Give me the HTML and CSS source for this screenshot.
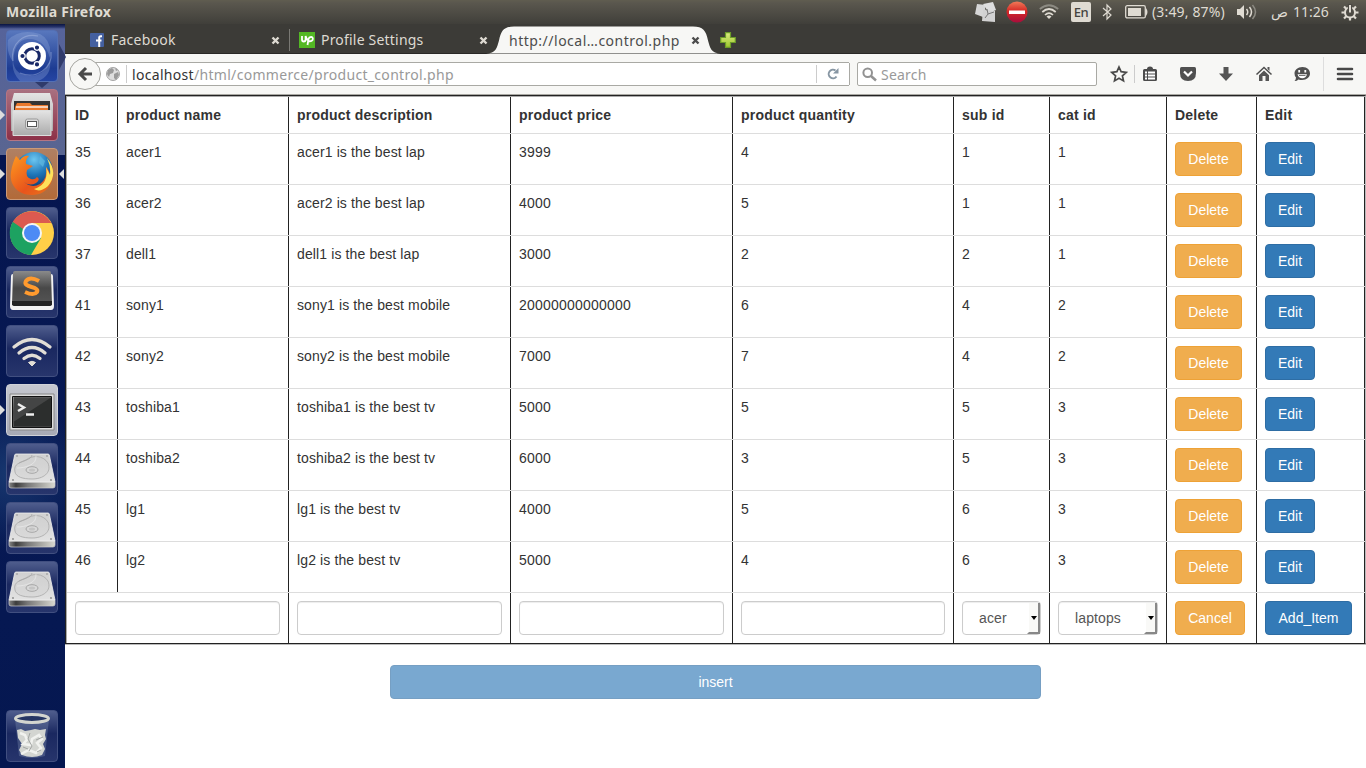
FILE: index.html
```html
<!DOCTYPE html>
<html lang="en">
<head>
<meta charset="utf-8">
<title>Mozilla Firefox</title>
<link rel="stylesheet" href="styles.css">
</head>
<body>
<svg class="defs" width="0" height="0">
  <defs>
    <linearGradient id="metal" x1="0" y1="0" x2="0" y2="1"><stop offset="0" stop-color="#e4e4e4"/><stop offset="1" stop-color="#aaa"/></linearGradient>
    <linearGradient id="plate" x1="0" y1="0" x2="0" y2="1"><stop offset="0" stop-color="#d0d0d0"/><stop offset="1" stop-color="#e2e2e2"/></linearGradient>
    <linearGradient id="front" x1="0" y1="0" x2="1" y2="0"><stop offset="0" stop-color="#888"/><stop offset=".15" stop-color="#3c3c3c"/><stop offset=".4" stop-color="#777"/><stop offset="1" stop-color="#d8d8d0"/></linearGradient>
    <linearGradient id="dark" x1="0" y1="0" x2="0" y2="1"><stop offset="0" stop-color="#8a8a8a"/><stop offset=".5" stop-color="#484848"/><stop offset="1" stop-color="#555"/></linearGradient>
    <linearGradient id="flame" x1="0" y1="0" x2="1" y2="1"><stop offset="0" stop-color="#ff9a1f"/><stop offset=".6" stop-color="#e8541c"/><stop offset="1" stop-color="#e9781c"/></linearGradient>
    <radialGradient id="ocean" cx=".5" cy=".2" r=".8"><stop offset="0" stop-color="#6cc6f0"/><stop offset=".5" stop-color="#1e75b8"/><stop offset="1" stop-color="#0c2f63"/></radialGradient>
    <linearGradient id="stopred" x1="0" y1="0" x2="0" y2="1"><stop offset="0" stop-color="#f07a58"/><stop offset=".45" stop-color="#d62a26"/><stop offset="1" stop-color="#a80d3c"/></linearGradient>
    <linearGradient id="plusg" x1="0" y1="0" x2="0" y2="1"><stop offset="0" stop-color="#dcec80"/><stop offset="1" stop-color="#9cc62c"/></linearGradient>
    <symbol id="disk" viewBox="0 0 52 52">
      <path d="M3 39h46v4q0 2-2 2H5q-2 0-2-2z" fill="url(#front)" stroke="#ccc" stroke-width=".7"/>
      <path d="M10 11h32q1 0 1.300 1L49 39H3L8.700 12q.3-1 1.300-1z" fill="url(#plate)" stroke="#f0f0f0" stroke-width=".8"/>
      <path d="M9 29C7 20 15 20 20 17C26 12 37 12 42 20C46 30 37 36 26 36C17 36 10 34 9 29zM13 20C18 17 25 17 26 12" fill="#cfcfcf" fill-opacity=".4" stroke="#a8a8a8" stroke-width=".8"/>
      <path d="M11 25C19 25 31 22 30 13" fill="none" stroke="#e8e8e8" stroke-width=".8"/>
      <ellipse cx="26" cy="27" rx="6" ry="3.300" fill="#d8d8d8" stroke="#999" stroke-width=".8"/>
      <ellipse cx="26" cy="27" rx="3" ry="1.500" fill="#c4c4c4"/>
      <g fill="#888"><circle cx="11" cy="13" r=".8"/><circle cx="41" cy="13" r=".8"/><circle cx="7" cy="37" r=".9"/><circle cx="45" cy="37" r=".9"/></g>
    </symbol>
    <symbol id="close" viewBox="0 0 9 9"><path d="M1.500 1.500l6 6m0-6l-6 6" stroke="currentColor" stroke-width="2.400"/></symbol>
  </defs>
</svg>

<header class="panel">
  <span class="app-name">Mozilla Firefox</span>
  <div class="tray">
    <svg class="t-notes" width="22" height="22" viewBox="0 0 22 22"><path d="M3 3l9 1-1 4 2 3-4 5-8-3z" fill="#d6d6d6"/><path d="M9 3l10-2 3 8-7 3z" fill="#dedede"/><path d="M9 9l12 1v11l-13-1z" fill="#d2d2d2"/><path d="M11 17l3-4-1-5m1 5l6-2" fill="none" stroke="#777" stroke-width="1"/></svg>
    <svg class="t-stop" width="22" height="22" viewBox="0 0 22 22"><circle cx="11" cy="11" r="10.500" fill="url(#stopred)"/><path d="M3 9.500h16v3.500H3z" fill="#fff"/></svg>
    <svg class="t-wifi" width="20" height="16" viewBox="0 0 20 16"><g fill="none" stroke-width="1.700"><path d="M.8 5Q10-2.500 19.200 5" stroke="#8c8a82"/><path d="M3.300 8Q10 2 16.700 8M6 11Q10 7 14 11" stroke="#dfdbd2"/></g><path d="M7.500 12.500Q10 10.500 12.500 12.500L10 15z" fill="#dfdbd2"/></svg>
    <span class="lang">En</span>
    <svg class="t-bt" width="10" height="18" viewBox="0 0 10 18"><path d="M1 5l8 7-4 4V2l4 4-8 7" fill="none" stroke="#dfdbd2" stroke-width="1.200"/></svg>
    <svg class="t-bat" width="24" height="14" viewBox="0 0 24 14"><rect x=".7" y=".7" width="19.600" height="12.200" rx="1.500" fill="none" stroke="#dfdbd2" stroke-width="1.300"/><path d="M3 3h13v8H3zM21 3q3 4 0 8z" fill="#dfdbd2"/></svg>
    <span class="bat-text">(3:49, 87%)</span>
    <svg class="t-vol" width="20" height="16" viewBox="0 0 20 16"><path d="M0 5h3l4-4v14l-4-4H0z" fill="#dfdbd2"/><g fill="none" stroke-width="1.500"><path d="M9.500 5q2.500 3 0 6M12.500 3q4 5 0 10" stroke="#dfdbd2"/><path d="M15.500 1q6 7 0 14" stroke="#8c8a82"/></g></svg>
    <span class="ampm">ص</span><span class="clock">11:26</span>
    <svg class="t-gear" width="18" height="18" viewBox="0 0 18 18"><circle cx="9" cy="9.500" r="5" fill="none" stroke="#dfdbd2" stroke-width="2"/><path d="M9 14v3.500M.5 9.500h4M13.500 9.500h4M3 3.500l2.500 2.500M15 3.500l-2.500 2.500M3 15.500l2.500-2.500M15 15.500l-2.500-2.500" stroke="#dfdbd2" stroke-width="2.200"/><path d="M6.800 1h4.400v8H6.800z" fill="#4c4a44"/><path d="M9 2v7.500" stroke="#dfdbd2" stroke-width="2"/></svg>
  </div>
</header>

<div class="desktop">
  <nav class="launcher">
    <div class="tile dash"><svg viewBox="0 0 52 52"><g fill="#a7b9e5" fill-opacity=".28"><path d="M2 10Q14-2 34 4Q46 10 44 28Q38 8 22 9Q8 10 7 32Q0 22 2 10zM7 30Q8 46 26 46Q40 44 44 30Q46 46 32 51H14Q5 42 7 30z"/></g><path d="M7 31C4 13 18 3 32 6M45 22C47 38 30 50 14 43" fill="none" stroke="#b9c7ea" stroke-opacity=".4" stroke-width="1.200"/><circle cx="26" cy="26" r="14" fill="#fff"/><circle cx="26" cy="26" r="7.300" fill="none" stroke="#182867" stroke-width="3"/><g stroke="#fff" stroke-width="1.200" fill="#182867"><circle cx="16.500" cy="26" r="2.700"/><circle cx="31" cy="17.600" r="2.700"/><circle cx="31" cy="34.400" r="2.700"/></g></svg></div>
    <div class="tile files running"><svg viewBox="0 0 52 52"><path d="M8 4h36l3 11v27H5V15z" fill="url(#metal)"/><path d="M8 12h36v10H8z" fill="#333"/><path d="M9 18l2-4h13l2 2h16v6H9z" fill="#e9782c"/><path d="M10 18h32" stroke="#fff" stroke-width="1.300"/><path d="M7 21.500h38v25H7z" fill="url(#metal)" stroke="#ddd"/><rect x="19.500" y="30" width="13" height="10" rx="2" fill="#ddd" stroke="#999"/><rect x="21.500" y="32.500" width="9" height="5" fill="#fff" stroke="#555"/></svg></div>
    <div class="tile firefox running focused"><svg viewBox="0 0 52 52"><circle cx="28" cy="23" r="19" fill="url(#ocean)"/><path d="M34 8l5 5-2 6-4-4z" fill="#60b9e0" opacity=".7"/><path d="M45 14C51 31 43 47 26 47C11 47 3 36 5 24C6 17 8 12 10 8L14 12Q18 7 23 8Q19 12 20 16L27 18L21 22Q19 29 25 31Q29 32 31 29Q35 31 30 35Q23 39 17 33Q25 41 34 36Q42 30 40 19Q44 23 44 28Q47 21 45 14z" fill="url(#flame)"/><path d="M41 10Q53 25 42 38Q34 45 28 41Q43 37 40 19L44 27Q45 18 41 10z" fill="#ffe15a"/></svg></div>
    <div class="tile"><svg viewBox="0 0 52 52"><circle cx="26" cy="26" r="22" fill="#ffcf48"/><path d="M26 26L7 15A22 22 0 0 1 45 16H26z" fill="#db4a3f"/><path d="M7 14.500A22 22 0 0 0 25 48L35 31 26 26z" fill="#1da261"/><path d="M7 15A22 22 0 0 1 45 16H26L17 22z" fill="#dc5a50"/><circle cx="26" cy="26" r="10" fill="#f5f5f5"/><circle cx="26" cy="26" r="8" fill="#4c8bf5"/></svg></div>
    <div class="tile"><svg viewBox="0 0 52 52"><path d="M5 10Q5 8 7 8H45Q47 8 47 10L48 40Q48 44 45 44H7Q4 44 4 40z" fill="#f2f2f2"/><path d="M9 5H43Q45 5 45 7L46 39H6L7 7Q7 5 9 5z" fill="url(#dark)"/><path d="M6 35H46V38Q46 40 43 40H9Q6 40 6 38z" fill="#222"/><path d="M33 15Q24 10 20 15C16 22 34 20 31 26Q28 30 19 26" fill="none" stroke="#ff9a2e" stroke-width="4"/></svg></div>
    <div class="tile"><svg viewBox="0 0 52 52"><g fill="none" stroke="#e2ded6" stroke-width="3.300" stroke-linecap="round"><path d="M8 22Q26 7 44 22M13 28Q26 17 39 28M18 33.500Q26 27 34 33.500"/></g><path d="M22.500 37.500Q26 35 29.500 37.500L26 41z" fill="#e2ded6" stroke="#e2ded6"/></svg></div>
    <div class="tile term running"><svg viewBox="0 0 52 52"><path d="M4 10h44v36H4z" fill="#ddd" stroke="#888"/><path d="M6.500 12.500h39v31h-39z" fill="url(#dark)" stroke="#111"/><path d="M8 13.500h37v29H8z" fill="#2c2e2d"/><path d="M8 13.500h37l-37 24z" fill="#555" opacity=".6"/><path d="M12 20l6 3.500-6 3.500M20 30.500h8" fill="none" stroke="#eee" stroke-width="2.400"/></svg></div>
    <div class="tile"><svg><use href="#disk"/></svg></div>
    <div class="tile"><svg><use href="#disk"/></svg></div>
    <div class="tile"><svg><use href="#disk"/></svg></div>
    <div class="tile trash"><svg viewBox="0 0 52 52"><path d="M9 9L13 46Q26 50 39 46L43 9z" fill="#8fa0bd" opacity=".3"/><path d="M11 20l4-1 4 2 6-1 4-1 5 1 6-1-1 6 1 4-3 5 2 5-3 6q-10 4-20 0l-3-5 3-6-4-6z" fill="#d3d5d1"/><path d="M14 23l5 2 2 5-4 4 8 1 1-6 7-4 3 4-5 4 4 5-5 5-7-3-8 4" fill="none" stroke="#f1f2ef" stroke-width="2.500"/><path d="M24 23l-2 6 4 7-3 5m14-14l-7 3m-13 7l5 2m9 3l4-2" fill="none" stroke="#a3a6a4"/><ellipse cx="26" cy="8.500" rx="16.500" ry="4" fill="#263663" stroke="#d3d5cf" stroke-width="3"/></svg></div>
  </nav>

  <main class="browser">
    <div class="tabs">
      <div class="tab tab-fb">
        <svg class="fav" width="14" height="14" viewBox="0 0 14 14"><rect width="14" height="14" rx="1" fill="#4460a0"/><path d="M12 3.200h-1.300q-1.500 0-1.500 1.500V14M6 7.500h5.500" fill="none" stroke="#fff" stroke-width="2"/></svg>
        <span class="label">Facebook</span><svg class="x" width="9" height="9"><use href="#close"/></svg>
      </div>
      <div class="tab tab-up">
        <svg class="fav" width="16" height="16" viewBox="0 0 16 16"><rect width="16" height="16" fill="#53b824"/><path d="M3 4v3.500q0 2 1.800 2t1.800-2V4q1 3 2 4M8.500 13l1-6q.5-2 2.500-2t1.800 2q0 2.500-4 2.200" fill="none" stroke="#fff" stroke-width="1.800"/></svg>
        <span class="label">Profile Settings</span><svg class="x" width="9" height="9"><use href="#close"/></svg>
      </div>
      <div class="tab tab-on">
        <svg class="shape" width="238" height="29" viewBox="0 0 238 29"><path d="M0 29C10 29 11 23 13 16C15 6 18 2 28 2H207C217 2 220 6 222 16C224 23 225 29 235 29z" fill="#f7f7f5"/></svg>
        <span class="label">http://local…control.php</span><svg class="x" width="9" height="9"><use href="#close"/></svg>
      </div>
      <svg class="plus" width="16" height="16" viewBox="0 0 16 16"><path d="M5.500.7h5v4.800h4.800v5h-4.800v4.800h-5v-4.800H.7v-5h4.800z" fill="url(#plusg)" stroke="#6c9c28" stroke-width="1.200"/></svg>
    </div>

    <div class="toolbar">
      <div class="urlbar">
        <div class="back"><svg width="16" height="16" viewBox="0 0 16 16"><path d="M9 2L3 8l6 6M3.500 8H15" fill="none" stroke="#4a4a4a" stroke-width="3"/></svg></div>
        <svg class="globe" width="14" height="14" viewBox="0 0 14 14"><circle cx="7" cy="7" r="6.500" fill="#ddd" stroke="#a5a5a5"/><path d="M2 3l4-2 2 2-1 3-3 1-1 3-2-3zM8 7l4-2 1 3-3 5-2-2zM9 1l3 2-2 1z" fill="#999"/></svg>
        <span class="url"><b>localhost</b>/html/commerce/product_control.php</span>
        <span class="reload"><svg width="12" height="12" viewBox="0 0 12 12"><path d="M9.500 8.500A4.300 4.300 0 1 1 8.500 2.500" fill="none" stroke="#8796a3" stroke-width="2"/><path d="M11.500 0v5.500H6z" fill="#8796a3"/></svg></span>
      </div>
      <div class="search"><svg width="15" height="15" viewBox="0 0 15 15"><circle cx="5.700" cy="5.700" r="4.300" fill="none" stroke="#929292" stroke-width="2"/><path d="M9 9l5 4.500" stroke="#929292" stroke-width="2.500"/></svg><span>Search</span></div>
      <div class="tools">
        <svg class="i-star" viewBox="0 0 18 18"><path d="M9 2l2.100 4.700 5.200.6-3.900 3.500 1.100 5.100L9 13.300l-4.500 2.600 1.100-5.100-3.900-3.500 5.200-.6z" fill="none" stroke="#4a4a4a" stroke-width="1.700"/></svg>
        <svg class="i-list" viewBox="0 0 18 18"><path d="M3.500 4H6q0-2.500 3-2.500T12 4h2.500Q16 4 16 5.500v9q0 1.500-1.500 1.500h-11Q2 16 2 14.500v-9Q2 4 3.500 4z" fill="#4c4c4c"/><path d="M4 7.500h2m1 0h7M4 10.500h2m1 0h7M4 13.500h2m1 0h7" stroke="#fff" stroke-width="1.800"/></svg>
        <svg class="i-pocket" viewBox="0 0 18 18"><path d="M1 3.500Q1 2 2.500 2h13Q17 2 17 3.500V8q0 8-8 8T1 8z" fill="#505050"/><path d="M5 6.500l4 4 4-4" fill="none" stroke="#fff" stroke-width="2.200"/></svg>
        <svg class="i-down" viewBox="0 0 18 18"><path d="M6.500 2h5v6.500H16L9 16 2 8.500h4.500z" fill="#555"/></svg>
        <svg class="i-home" viewBox="0 0 18 18"><path d="M1.500 9.500L9 2.500l7.500 7" fill="none" stroke="#4e4e4e" stroke-width="1.500"/><path d="M9 5.500l5 4.700V16h-3.500v-5h-3v5H4v-5.800zM12.500 2h2v4l-2-2z" fill="#555"/></svg>
        <svg class="i-smile" viewBox="0 0 18 18"><path d="M9.500 2c5 0 7.500 3 7.500 6.500S14 15 9 15q-2 0-3.500-.5Q4 16 1.500 16 3 14.500 3 12.500 1.500 11 1.500 8.500C1.500 5 4.500 2 9.500 2z" fill="#505050"/><path d="M6.200 5v2.500M12.300 5v2.500" stroke="#fff" stroke-width="1.800"/><path d="M4.500 9.300h9.500q-1 4-4.700 4t-4.800-4z" fill="#fff"/><path d="M6 10.500h6.500" stroke="#505050" stroke-width=".8"/></svg>
        <svg class="i-menu" viewBox="0 0 18 18"><path d="M2 4h14M2 9h14M2 14h14" stroke="#484848" stroke-width="2.600" stroke-linecap="round"/></svg>
      </div>
    </div>

    <section class="page">
      <div class="table">
        <div class="row head"><div>ID</div><div>product name</div><div>product description</div><div>product price</div><div>product quantity</div><div>sub id</div><div>cat id</div><div>Delete</div><div>Edit</div></div>
        <div class="row"><div>35</div><div>acer1</div><div>acer1 is the best lap</div><div>3999</div><div>4</div><div>1</div><div>1</div><div><button class="btn warn">Delete</button></div><div><button class="btn">Edit</button></div></div>
        <div class="row"><div>36</div><div>acer2</div><div>acer2 is the best lap</div><div>4000</div><div>5</div><div>1</div><div>1</div><div><button class="btn warn">Delete</button></div><div><button class="btn">Edit</button></div></div>
        <div class="row"><div>37</div><div>dell1</div><div>dell1 is the best lap</div><div>3000</div><div>2</div><div>2</div><div>1</div><div><button class="btn warn">Delete</button></div><div><button class="btn">Edit</button></div></div>
        <div class="row"><div>41</div><div>sony1</div><div>sony1 is the best mobile</div><div>20000000000000</div><div>6</div><div>4</div><div>2</div><div><button class="btn warn">Delete</button></div><div><button class="btn">Edit</button></div></div>
        <div class="row"><div>42</div><div>sony2</div><div>sony2 is the best mobile</div><div>7000</div><div>7</div><div>4</div><div>2</div><div><button class="btn warn">Delete</button></div><div><button class="btn">Edit</button></div></div>
        <div class="row"><div>43</div><div>toshiba1</div><div>toshiba1 is the best tv</div><div>5000</div><div>5</div><div>5</div><div>3</div><div><button class="btn warn">Delete</button></div><div><button class="btn">Edit</button></div></div>
        <div class="row"><div>44</div><div>toshiba2</div><div>toshiba2 is the best tv</div><div>6000</div><div>3</div><div>5</div><div>3</div><div><button class="btn warn">Delete</button></div><div><button class="btn">Edit</button></div></div>
        <div class="row"><div>45</div><div>lg1</div><div>lg1 is the best tv</div><div>4000</div><div>5</div><div>6</div><div>3</div><div><button class="btn warn">Delete</button></div><div><button class="btn">Edit</button></div></div>
        <div class="row"><div>46</div><div>lg2</div><div>lg2 is the best tv</div><div>5000</div><div>4</div><div>6</div><div>3</div><div><button class="btn warn">Delete</button></div><div><button class="btn">Edit</button></div></div>
        <div class="row form"><div><input class="field"></div><div><input class="field"></div><div><input class="field"></div><div><input class="field"></div><div><span class="select">acer<i></i></span></div><div><span class="select">laptops<i></i></span></div><div><button class="btn warn cancel">Cancel</button></div><div><button class="btn add">Add_Item</button></div></div>
      </div>
      <button class="btn insert">insert</button>
    </section>
  </main>
</div>
</body>
</html>
```
FILE: styles.css
```css
* { box-sizing: border-box; }
body { margin: 0; width: 1366px; height: 768px; overflow: hidden; background: #fff; font-family: "Noto Sans", "Open Sans", sans-serif; }
svg { display: block; flex: none; }
.defs { position: absolute; }

.panel { height: 24px; display: flex; justify-content: space-between; align-items: center; padding-left: 6px; color: #dfdbd2; background: linear-gradient(#605d50 0, #5a574e 3px, #403f3a); line-height: 24px; white-space: nowrap; }
.app-name { font-size: 14px; font-weight: bold; letter-spacing: .25px; }
.tray { width: 392px; height: 24px; display: flex; align-items: center; font-size: 14px; }
.t-stop { margin-left: 10px; }
.t-wifi { margin-left: 11px; }
.lang { margin-left: 12px; width: 20px; height: 20px; border-radius: 2px; background: #dfdbd2; color: #45443f; font-size: 13px; line-height: 21px; text-align: center; font-weight: 500; letter-spacing: -.5px; }
.t-bt { margin-left: 11px; }
.t-bat { margin-left: 13px; }
.bat-text { width: 74px; margin-left: 3px; letter-spacing: .15px; }
.t-vol { margin-left: 11px; }
.ampm { margin-left: 14px; width: 17px; font-family: "DejaVu Sans", sans-serif; font-size: 14px; }
.clock { margin-left: 5px; width: 37px; }
.t-gear { margin-left: 11px; }

.desktop { display: flex; height: 744px; }
.launcher { width: 65px; height: 744px; flex: none; padding: 6px 7px 6px 6px; display: flex; flex-direction: column; gap: 7px; background: radial-gradient(circle at 10px 450px, #17376f 0, transparent 75px), linear-gradient(#0a1440 0, #27346c 3px, #56639a 5px, #596591 131px, #05154f 131px, #071954 60%, #051750); }
.tile { width: 52px; height: 52px; flex: none; position: relative; border-radius: 4px; border: 1px solid #414f80; background: linear-gradient(#4f5d8d, #1a2860 45%, #27356c); }
.tile svg { width: 52px; height: 52px; margin: -1px; }
.dash { background: linear-gradient(#5877bd, #1d3c93 75%, #2545a4); border-color: #5370b5; }
.files { background: linear-gradient(#a97080, #8d3047); border-color: #b67583; }
.firefox { background: linear-gradient(#b08063, #b26a39); border-color: #cb9a78; }
.term { background: linear-gradient(#c5c7cf, #a7aab5); border-color: #d0d2d8; }
.trash { margin-top: auto; }
.running::before { content: ""; position: absolute; left: -7px; top: 20px; border: 5px solid transparent; border-left-color: #ddd; border-right: 0; }
.focused::after { content: ""; position: absolute; right: -7px; top: 20px; border: 5px solid transparent; border-right-color: #ddd; border-left: 0; }
.dash::before { content: ""; position: absolute; left: 52px; top: 13px; border: 13px solid transparent; border-left: 7px solid #303b6b; border-right: 0; }
.dash::after { content: ""; position: absolute; left: 28px; top: 51px; border: 7px solid transparent; border-top: 6px solid #303b6b; border-bottom: 0; }

.browser { width: 1301px; }
.tabs { height: 30px; display: flex; background: #3c3b37; border-bottom: 1px solid #292826; font-size: 14px; color: #dedad2; white-space: nowrap; }
.tab { display: flex; align-items: center; height: 29px; padding-top: 3px; line-height: 20px; }
.tab-fb { width: 225px; padding-left: 25px; background: linear-gradient(#7a7974, #7a7974) 224px 5px / 1px 22px no-repeat; }
.tab-fb .label { margin-left: 7px; width: 160px; letter-spacing: .25px; }
.tab-up { width: 198px; padding-left: 9px; }
.tab-up .label { margin-left: 6px; width: 160px; letter-spacing: .2px; }
.tab-on { position: relative; width: 232px; height: 30px; padding-left: 21px; color: #4c4c4c; }
.tab-on .shape { position: absolute; left: -2px; top: 0; height: 30px; }
.tab-on .label { position: relative; width: 182px; letter-spacing: .5px; }
.tab-on .x { position: relative; }
.plus { margin-top: 8px; }

.toolbar { height: 41px; display: flex; align-items: center; background: #f7f7f5; border-bottom: 1px solid #aaa9a4; font-size: 14px; color: #999; white-space: nowrap; }
.urlbar { margin-left: 4px; width: 781px; height: 32px; display: flex; align-items: center; background: linear-gradient(#a9a9a4, #a9a9a4) 15px 4px / 765px 1px no-repeat, linear-gradient(#a9a9a4, #a9a9a4) 15px 27px / 765px 1px no-repeat, linear-gradient(#a9a9a4, #a9a9a4) 780px 5px / 1px 22px no-repeat, linear-gradient(#fff, #fff) 15px 5px / 765px 22px no-repeat; }
.back { width: 32px; height: 32px; flex: none; border: 1px solid #a5a5a0; border-radius: 50%; background: #f7f7f5; display: grid; place-items: center; }
.globe { margin-left: 5px; }
.url { margin-left: 6px; padding-left: 5px; height: 18px; line-height: 19px; border-left: 1px solid #ccc; width: 690px; letter-spacing: .31px; }
.url b { font-weight: normal; color: #333; }
.reload { width: 33px; height: 18px; border-left: 1px solid #ccc; display: grid; place-items: center; }
.search { margin-left: 7px; width: 240px; height: 24px; padding-left: 4px; border: 1px solid #a9a9a4; border-radius: 2px; background: #fff; display: flex; align-items: center; gap: 4px; line-height: 23px; letter-spacing: .2px; }
.tools { display: flex; align-items: center; }
.tools svg { width: 18px; height: 18px; margin-left: 20px; }
.tools .i-star { margin-left: 13px; }
.tools .i-list { margin-left: 6px; padding-left: 6px; box-sizing: content-box; border-left: 1px solid #ccc; }
.tools .i-menu { margin-left: 12px; padding: 8px 0 8px 12px; box-sizing: content-box; border-left: 1px solid #ddd; }

.page { display: flex; flex-direction: column; font-family: "Liberation Sans", Arial, sans-serif; font-size: 14px; line-height: 20px; color: #333; }
.table { width: 1301px; border: 1px solid #222; box-shadow: inset 1px 1px #aaa, 0 1px #bbb; padding: 1px 0 0 1px; border-right-color: #bbb; position: relative; }
.row { display: grid; grid-template-columns: 50px 171px 222px 222px 221px 96px 117px 90px 108px; height: 51px; border-bottom: 1px solid #ddd; letter-spacing: .12px; }
.row > div { padding: 8px; border-left: 1px solid #222; }
.row > div:first-child { border-left: 0; }
.row > div:nth-child(4), .row > div:first-child { letter-spacing: .21px; }
.row > div:last-child { border-right: 1px solid #222; width: 109px; }
.row.head { height: 37px; font-weight: bold; }
.row.head > div { letter-spacing: .22px; }
.row.form { grid-template-columns: 221px 222px 222px 221px 96px 117px 90px 108px; height: 50px; border-bottom: 0; }
.btn { display: block; height: 34px; width: 50px; margin: 0; padding: 0; font: inherit; color: #fff; background: #337ab7; border: 1px solid #2e6da4; border-radius: 4px; text-align: center; }
.warn { width: 67px; background: #f0ad4e; border-color: #eea236; }
.cancel { width: 70px; }
.add { width: 87px; }
.field { display: block; width: 205px; height: 34px; border: 1px solid #ccc; border-radius: 4px; box-shadow: inset 0 1px 1px rgba(0,0,0,.075); }
.row > div:nth-child(4) .field { width: 204px; }
.select { position: relative; display: block; height: 34px; border: 1px solid #ccc; border-radius: 4px; padding: 6px 16px; color: #555; box-shadow: inset 0 1px 1px rgba(0,0,0,.075); }
.select i { position: absolute; right: 0; top: 1px; width: 13px; height: 31px; border-right: 2px solid #888; border-bottom: 2px solid #888; border-left: 2px solid transparent; background: #f9f9f7 padding-box; }
.select i::after { content: ""; position: absolute; left: 2px; top: 13px; border: 3px solid transparent; border-top: 4px solid #000; border-bottom: 0; }
.insert { margin: 21px 0 0 325px; width: 651px; opacity: .65; }
```
